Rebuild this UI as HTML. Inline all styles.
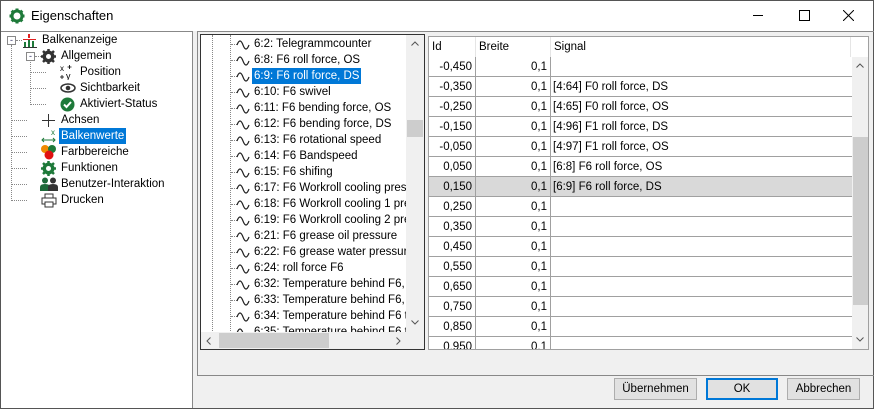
<!DOCTYPE html>
<html><head><style>
*{box-sizing:border-box;margin:0;padding:0}
body{width:874px;height:409px;overflow:hidden;background:#f0f0f0;font-family:"Liberation Sans",sans-serif;font-size:11.5px;color:#000;position:relative}
.abs{position:absolute}
.frame{left:0;top:0;width:874px;height:409px;border:1px solid #555}
.title{left:1px;top:1px;width:872px;height:30px;background:#fff}
.t{position:absolute;white-space:nowrap;line-height:16px}
.hl{background:#0078d7;color:#fff;padding:0 2px;margin-left:-2px}
.dot{position:absolute;border-left:1px dotted #888}
.doth{position:absolute;border-top:1px dotted #888}
.row{position:absolute;left:0;width:423px;height:20px;border-bottom:1px solid #a0a0a0}
.cell{position:absolute;top:0;height:20px;line-height:20px;border-right:1px solid #a0a0a0}
.btn{position:absolute;top:378px;height:22px;background:#e1e1e1;border:1px solid #adadad;text-align:center;line-height:20px}
</style></head><body>
<div class="abs frame"></div>
<div class="abs title"></div>
<svg class="abs" style="left:9px;top:8px" width="16" height="16" viewBox="0 0 16 16"><circle cx="8" cy="8" r="5" fill="none" stroke="#1e7a3a" stroke-width="3"/><g stroke="#1e7a3a" stroke-width="3"><line x1="8" y1="0.5" x2="8" y2="3"/><line x1="8" y1="13" x2="8" y2="15.5"/><line x1="0.5" y1="8" x2="3" y2="8"/><line x1="13" y1="8" x2="15.5" y2="8"/><line x1="2.7" y1="2.7" x2="4.5" y2="4.5"/><line x1="11.5" y1="11.5" x2="13.3" y2="13.3"/><line x1="2.7" y1="13.3" x2="4.5" y2="11.5"/><line x1="11.5" y1="4.5" x2="13.3" y2="2.7"/></g></svg>
<div class="t" style="left:31px;top:8px;font-size:13px">Eigenschaften</div>
<div class="abs" style="left:753px;top:15px;width:10px;height:1px;background:#000"></div>
<div class="abs" style="left:799px;top:10px;width:11px;height:11px;border:1px solid #000"></div>
<svg class="abs" style="left:843px;top:10px" width="11" height="11"><path d="M0 0L11 11M11 0L0 11" stroke="#000" stroke-width="1"/></svg>

<!-- left tree panel -->
<div class="abs" style="left:1px;top:31px;width:192px;height:377px;background:#fff;border-right:1px solid #888;border-top:1px solid #888"></div>
<div class="dot" style="left:11px;top:45px;height:156px"></div>
<div class="dot" style="left:30px;top:60px;height:45px"></div>
<div class="abs" style="left:7px;top:36px;width:9px;height:9px;border:1px solid #888;background:#fff;font-size:9px;line-height:6px;text-align:center;color:#336">-</div>
<div class="abs" style="left:26px;top:52px;width:9px;height:9px;border:1px solid #888;background:#fff;font-size:9px;line-height:6px;text-align:center;color:#336">-</div>
<div class="doth" style="left:16px;top:40px;width:6px"></div>
<div class="doth" style="left:35px;top:56px;width:6px"></div>
<div class="doth" style="left:30px;top:72px;width:16px"></div>
<div class="doth" style="left:30px;top:88px;width:16px"></div>
<div class="doth" style="left:30px;top:104px;width:16px"></div>
<div class="doth" style="left:11px;top:120px;width:16px"></div>
<div class="doth" style="left:11px;top:136px;width:16px"></div>
<div class="doth" style="left:11px;top:152px;width:16px"></div>
<div class="doth" style="left:11px;top:168px;width:16px"></div>
<div class="doth" style="left:11px;top:184px;width:16px"></div>
<div class="doth" style="left:11px;top:200px;width:16px"></div>
<svg class="abs" style="left:22px;top:33px" width="16" height="15"><rect x="2" y="9" width="2" height="5" fill="#1e7a3a"/><rect x="6" y="6" width="2" height="8" fill="#1e7a3a"/><rect x="10" y="8" width="2" height="6" fill="#1e7a3a"/><rect x="6" y="1" width="2" height="4" fill="#e02020"/><rect x="1" y="6" width="13" height="1" fill="#e02020"/><rect x="1" y="14" width="14" height="1" fill="#333"/></svg>
<div class="t" style="left:42px;top:32px">Balkenanzeige</div>
<svg class="abs" style="left:41px;top:49px" width="15" height="15"><circle cx="7.5" cy="7.5" r="4.5" fill="none" stroke="#333" stroke-width="3"/><g stroke="#333" stroke-width="2.5"><line x1="7.5" y1="0" x2="7.5" y2="15"/><line x1="0" y1="7.5" x2="15" y2="7.5"/><line x1="2" y1="2" x2="13" y2="13"/><line x1="2" y1="13" x2="13" y2="2"/></g><circle cx="7.5" cy="7.5" r="2.5" fill="#fff"/></svg>
<div class="t" style="left:61px;top:48px">Allgemein</div>
<svg class="abs" style="left:59px;top:64px" width="16" height="16"><text x="1" y="7" font-size="8" font-family="Liberation Sans">x</text><text x="7" y="15" font-size="9" font-family="Liberation Sans">y</text><path d="M10.5 1v4M8.5 3h4M3 11v4M1 13h4" stroke="#000" stroke-width="0.8"/></svg>
<div class="t" style="left:80px;top:64px">Position</div>
<svg class="abs" style="left:60px;top:82px" width="16" height="12"><ellipse cx="8" cy="6" rx="7" ry="4" fill="none" stroke="#333" stroke-width="1.5"/><circle cx="8" cy="6" r="2.3" fill="#333"/></svg>
<div class="t" style="left:80px;top:80px">Sichtbarkeit</div>
<svg class="abs" style="left:60px;top:97px" width="15" height="15"><circle cx="7.5" cy="7.5" r="7" fill="#1e7a3a"/><path d="M4 7.5l2.5 2.5 4.5-5" stroke="#fff" stroke-width="2" fill="none"/></svg>
<div class="t" style="left:80px;top:96px">Aktiviert-Status</div>
<svg class="abs" style="left:41px;top:113px" width="15" height="15"><path d="M7.5 1v13M1 7.5h13" stroke="#333" stroke-width="1"/></svg>
<div class="t" style="left:61px;top:112px">Achsen</div>
<svg class="abs" style="left:41px;top:128px" width="16" height="16"><text x="10" y="7" font-size="8" fill="#1e7a3a">x</text><path d="M1 12h13M3 10l-2 2 2 2M12 10l2 2-2 2" stroke="#1e7a3a" stroke-width="1" fill="none"/></svg>
<div class="t hl" style="left:61px;top:128px">Balkenwerte</div>
<svg class="abs" style="left:41px;top:144px" width="16" height="16"><circle cx="4" cy="5" r="4" fill="#f08a00"/><circle cx="11" cy="5" r="4" fill="#1e7a3a"/><circle cx="8" cy="11" r="4.5" fill="#e01010"/></svg>
<div class="t" style="left:61px;top:144px">Farbbereiche</div>
<svg class="abs" style="left:41px;top:161px" width="15" height="15"><circle cx="7.5" cy="7.5" r="4.5" fill="none" stroke="#1e7a3a" stroke-width="3"/><g stroke="#1e7a3a" stroke-width="2.5"><line x1="7.5" y1="0" x2="7.5" y2="15"/><line x1="0" y1="7.5" x2="15" y2="7.5"/><line x1="2" y1="2" x2="13" y2="13"/><line x1="2" y1="13" x2="13" y2="2"/></g><circle cx="7.5" cy="7.5" r="2.5" fill="#fff"/></svg>
<div class="t" style="left:61px;top:160px">Funktionen</div>
<svg class="abs" style="left:40px;top:177px" width="18" height="14"><circle cx="5" cy="3.5" r="3" fill="#1e6a3a"/><circle cx="13" cy="3.5" r="3" fill="#333"/><path d="M0 14v-4q0-3 5-3t5 3v4z" fill="#1e6a3a"/><path d="M8 14v-4q0-3 5-3t5 3v4z" fill="#333"/></svg>
<div class="t" style="left:61px;top:176px">Benutzer-Interaktion</div>
<svg class="abs" style="left:41px;top:193px" width="16" height="15"><rect x="4" y="1" width="8" height="4" fill="none" stroke="#333"/><rect x="1" y="5" width="14" height="6" fill="none" stroke="#333"/><rect x="4" y="9" width="8" height="5" fill="#fff" stroke="#333"/></svg>
<div class="t" style="left:61px;top:192px">Drucken</div>

<!-- right area -->
<div class="abs" style="left:197px;top:31px;width:677px;height:345px;border-left:1px solid #888;border-top:1px solid #888;border-bottom:1px solid #888"></div>

<div class="abs" style="left:200px;top:34px;width:225px;height:316px;background:#fff;border:1px solid #333;overflow:hidden">
<div class="dot" style="left:11px;top:0;height:300px"></div>
<div class="dot" style="left:29px;top:0;height:300px"></div>
</div>
<div class="abs" id="sig" style="left:231px;top:36px;width:175px;height:296px;overflow:hidden"></div>
<div class="abs" style="left:406px;top:35px;width:18px;height:297px;background:#f0f0f0"></div>
<div class="abs" style="left:407px;top:120px;width:16px;height:17px;background:#cdcdcd"></div>
<svg class="abs" style="left:411px;top:41px" width="8" height="5"><path d="M0.5 4.5L4 1l3.5 3.5" stroke="#555" fill="none"/></svg>
<svg class="abs" style="left:411px;top:320px" width="8" height="5"><path d="M0.5 0.5L4 4l3.5-3.5" stroke="#555" fill="none"/></svg>
<div class="abs" style="left:201px;top:332px;width:223px;height:17px;background:#f0f0f0"></div>
<div class="abs" style="left:219px;top:333px;width:110px;height:15px;background:#cdcdcd"></div>
<svg class="abs" style="left:206px;top:337px" width="5" height="8"><path d="M4.5 0.5L1 4l3.5 3.5" stroke="#555" fill="none"/></svg>
<svg class="abs" style="left:396px;top:337px" width="5" height="8"><path d="M0.5 0.5L4 4 0.5 7.5" stroke="#555" fill="none"/></svg>

<div class="abs" style="left:428px;top:36px;width:441px;height:314px;background:#fff;border:1px solid #a0a0a0;overflow:hidden">
<div class="abs" style="left:0;top:0;width:422px;height:21px">
<div class="cell" style="left:0;width:47px;padding-left:3px;border-color:#e5e5e5">Id</div>
<div class="cell" style="left:47px;width:75px;padding-left:3px;border-color:#e5e5e5">Breite</div>
<div class="cell" style="left:122px;width:300px;padding-left:3px;border-color:#e5e5e5">Signal</div>
</div>
<div id="rows"></div>
<div class="abs" style="left:423px;top:20px;width:17px;height:293px;background:#f0f0f0"></div>
<div class="abs" style="left:424px;top:100px;width:15px;height:168px;background:#cdcdcd"></div>
<svg class="abs" style="left:427px;top:26px" width="8" height="5"><path d="M0.5 4.5L4 1l3.5 3.5" stroke="#555" fill="none"/></svg>
<svg class="abs" style="left:427px;top:300px" width="8" height="5"><path d="M0.5 0.5L4 4l3.5-3.5" stroke="#555" fill="none"/></svg>
</div>

<div class="btn" style="left:614px;width:83px">Übernehmen</div>
<div class="btn" style="left:706px;width:72px;border:2px solid #0078d7;line-height:18px">OK</div>
<div class="btn" style="left:787px;width:73px">Abbrechen</div>

<script>
var s=["6:2: Telegrammcounter","6:8: F6 roll force, OS","6:9: F6 roll force, DS","6:10: F6 swivel","6:11: F6 bending force, OS","6:12: F6 bending force, DS","6:13: F6 rotational speed","6:14: F6 Bandspeed","6:15: F6 shifing","6:17: F6 Workroll cooling pressure","6:18: F6 Workroll cooling 1 pressure","6:19: F6 Workroll cooling 2 pressure","6:21: F6 grease oil pressure","6:22: F6 grease water pressure","6:24: roll force F6","6:32: Temperature behind F6, top","6:33: Temperature behind F6, bottom","6:34: Temperature behind F6 top","6:35: Temperature behind F6 top"];
var h="";
s.forEach(function(t,i){var y=i*16;
h+='<div class="doth" style="left:0;top:'+(y+8)+'px;width:6px"></div><svg class="abs" style="left:5px;top:'+(y+1)+'px" width="16" height="14"><path d="M1 6q3-8 6 0t6 0" transform="translate(0,2)" stroke="#222" stroke-width="1.2" fill="none"/></svg><div class="t '+(i==2?'hl':'')+'" style="left:23px;top:'+y+'px">'+t+'</div>';});
document.getElementById('sig').innerHTML=h;
var sig={1:"[4:64] F0 roll force, DS",2:"[4:65] F0 roll force, OS",3:"[4:96] F1 roll force, DS",4:"[4:97] F1 roll force, OS",5:"[6:8] F6 roll force, OS",6:"[6:9] F6 roll force, DS"};
var r="";
for(var i=0;i<15;i++){var v=-0.45+i*0.1;var txt=(v<0?"-":"")+Math.abs(v).toFixed(3).replace(".",",");
r+='<div class="row" style="top:'+(20+i*20)+'px;'+(i==6?'background:#d9d9d9':'')+'"><div class="cell" style="left:0;width:47px;text-align:right;padding-right:3px">'+txt+'</div><div class="cell" style="left:47px;width:75px;text-align:right;padding-right:3px">0,1</div><div class="cell" style="left:122px;width:301px;padding-left:2px;border:none">'+(sig[i]||"")+'</div></div>';}
document.getElementById('rows').innerHTML=r;
</script>
</body></html>
